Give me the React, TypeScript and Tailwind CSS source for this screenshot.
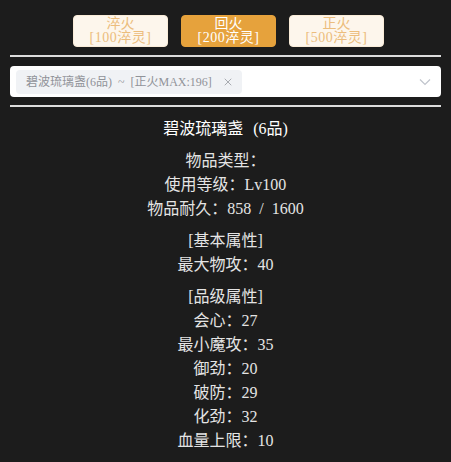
import { X } from 'lucide-react';

const FONT = "font-['Liberation_Serif','Noto_Sans_CJK_SC',serif]";

const fires = [
  { name: '淬火', cost: '[100淬灵]', active: false },
  { name: '回火', cost: '[200淬灵]', active: true },
  { name: '正火', cost: '[500淬灵]', active: false },
];

const groups: string[][] = [
  ['物品类型：', '使用等级：Lv100', '物品耐久：858 / 1600'],
  ['[基本属性]', '最大物攻：40'],
  ['[品级属性]', '会心：27', '最小魔攻：35', '御劲：20', '破防：29', '化劲：32', '血量上限：10'],
];

export default function App() {
  return (
    <div className={`min-h-[462px] bg-[#1c1c1c] px-[10px] pt-[15px] ${FONT} [word-spacing:4px]`}>
      <div className="flex justify-center gap-[13px] pl-[6px]">
        {fires.map((f) => (
          <button
            key={f.name}
            className={`flex h-[32px] w-[95px] flex-col items-center justify-center rounded-[4px] border text-[14px] leading-[14px] ${
              f.active
                ? 'border-[#e6a23c] bg-[#e6a23c] text-white'
                : 'border-[#faecd8] bg-[#fdf6ec] text-[#ecbd7c]'
            }`}
          >
            <span>{f.name}</span>
            <span className="tracking-[0.5px]">{f.cost}</span>
          </button>
        ))}
      </div>

      <hr className="mt-[8px] border-t-2 border-[#dcdcdc]" />

      <div className="mt-[9px] flex h-[31px] items-center rounded-[4px] bg-white pl-[6px] pr-[10px]">
        <span className="flex h-[24px] items-center gap-[10px] rounded-[4px] bg-[#f0f2f5] pl-[10px] pr-[8px] text-[12px] text-[#909399] [word-spacing:3px]">
          <span>碧波琉璃盏(6品) ~ [正火MAX:196]</span>
          <X className="h-[12px] w-[12px]" strokeWidth={1.5} />
        </span>
        <svg className="ml-auto" width="12" height="8" viewBox="0 0 12 8" fill="none">
          <path d="M1 1.5 L6 6.5 L11 1.5" stroke="#c0c4cc" strokeWidth="1.2" />
        </svg>
      </div>

      <hr className="mt-[8px] border-t-2 border-[#dcdcdc]" />

      <div className="flex flex-col items-center pt-[10px] text-[16px] text-[#e4e4e4]">
        <div className="leading-[24px] text-white [word-spacing:6px]">碧波琉璃盏 (6品)</div>
        {groups.map((g, i) => (
          <div key={i} className="mt-[8px] flex flex-col items-center">
            {g.map((line) => (
              <div key={line} className="leading-[24px]">
                {line}
              </div>
            ))}
          </div>
        ))}
      </div>
    </div>
  );
}
